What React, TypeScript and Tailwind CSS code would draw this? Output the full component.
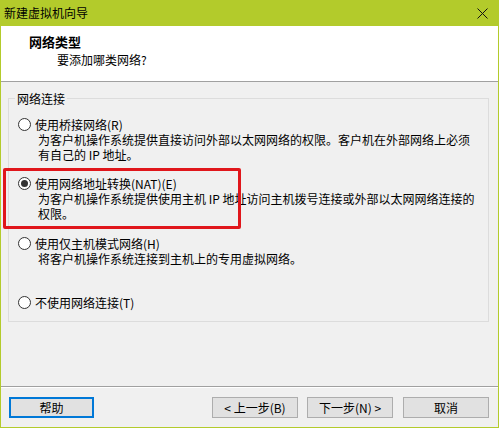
import { ReactNode } from 'react'

function Radio({ checked }: { checked?: boolean }) {
  return (
    <span className="w-[13px] h-[13px] rounded-full border border-[#333] bg-white flex items-center justify-center shrink-0">
      {checked && <span className="w-[7px] h-[7px] rounded-full bg-[#333]" />}
    </span>
  )
}

function Option({ label, checked, children, className }: { label: string; checked?: boolean; children?: ReactNode; className?: string }) {
  return (
    <div className={className}>
      <div className="flex items-center h-[15px] gap-[4px] pl-[9px]">
        <Radio checked={checked} />
        <span>{label}</span>
      </div>
      {children && <div className="pl-[29px] leading-[15px] whitespace-nowrap">{children}</div>}
    </div>
  )
}

function Btn({ children, focused }: { children: ReactNode; focused?: boolean }) {
  return (
    <button
      className={
        focused
          ? 'w-[85px] h-[21px] bg-[#e1e1e1] border-2 border-[#0078d7] flex items-center justify-center text-[12px] leading-none'
          : 'w-[86px] h-[21px] bg-[#e1e1e1] border border-[#adadad] flex items-center justify-center text-[12px] leading-none'
      }
    >
      {children}
    </button>
  )
}

export default function App() {
  return (
    <div
      className="relative w-[499px] h-[428px] bg-[#b3cb2b] flex flex-col px-px pb-px text-[12px] text-black"
      style={{ fontFamily: '"Noto Sans CJK SC", "Liberation Sans", sans-serif' }}
    >
      {/* Title bar */}
      <div className="h-[26px] flex items-center justify-between pl-[3px] pr-[10px] shrink-0">
        <span className="text-[12px]">新建虚拟机向导</span>
        <svg width="11" height="11" viewBox="0 0 11 11" className="text-[#111]">
          <path d="M0.5 0.5L10.5 10.5M10.5 0.5L0.5 10.5" stroke="currentColor" strokeWidth="1" />
        </svg>
      </div>

      <div className="flex-1 bg-[#f0f0f0] flex flex-col">
        {/* Header */}
        <div className="h-[56px] bg-white border-b border-[#a0a0a0] pt-[8px] pl-[28px] shrink-0">
          <p className="font-bold text-[13px] leading-[16px]">网络类型</p>
          <p className="pl-[28px] mt-[2px] leading-[16px]">要添加哪类网络?</p>
        </div>

        {/* Group box */}
        <fieldset className="ml-[7px] mr-[9px] mt-[9px] border border-[#dcdcdc] h-[231px] pt-[11px]">
          <legend className="ml-[6px] px-[2px] leading-[15px]">网络连接</legend>

          <Option label="使用桥接网络(R)">
            为客户机操作系统提供直接访问外部以太网网络的权限。客户机在外部网络上必须
            <br />
            有自己的 IP 地址。
          </Option>

          <Option label="使用网络地址转换(NAT)(E)" checked className="mt-[14px]">
            为客户机操作系统提供使用主机 IP 地址访问主机拨号连接或外部以太网网络连接的
            <br />
            权限。
          </Option>

          <Option label="使用仅主机模式网络(H)" className="mt-[15px]">
            将客户机操作系统连接到主机上的专用虚拟网络。
          </Option>

          <Option label="不使用网络连接(T)" className="mt-[29px]" />
        </fieldset>

        <div className="flex-1" />

        {/* Footer */}
        <div className="border-t border-[#a0a0a0] shadow-[inset_0_1px_0_#fff] pt-[10px] pb-[9px] px-[8px] flex items-center">
          <Btn focused>帮助</Btn>
          <div className="flex-1" />
          <div className="flex gap-[9px] mr-[1px]">
            <Btn>&lt; 上一步(B)</Btn>
            <Btn>下一步(N) &gt;</Btn>
            <div className="ml-[1px]">
              <Btn>取消</Btn>
            </div>
          </div>
        </div>
      </div>

      {/* red annotation box */}
      <div className="absolute left-[3px] top-[168px] w-[238px] h-[61px] border-[3px] border-[#e0161b] rounded-[2px]" />
    </div>
  )
}
